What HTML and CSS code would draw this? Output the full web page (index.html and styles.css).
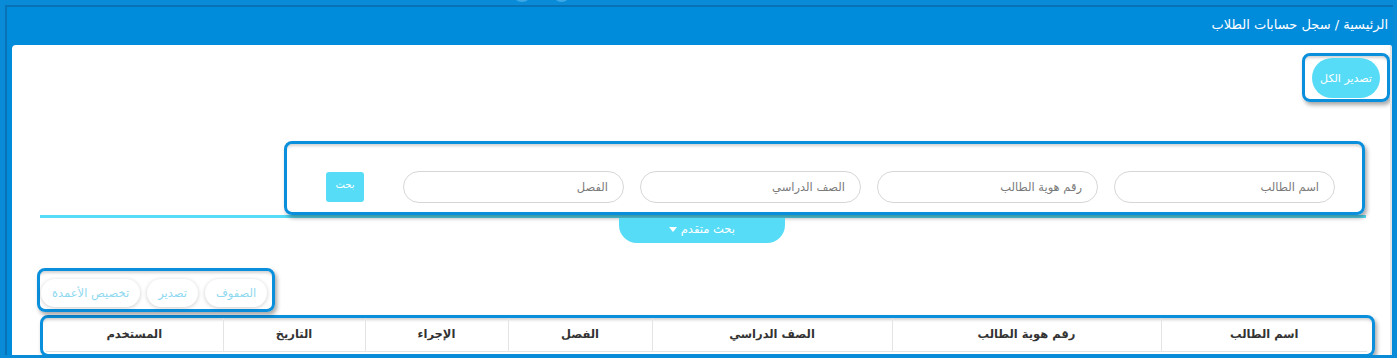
FILE: index.html
```html
<!DOCTYPE html>
<html lang="ar" dir="rtl">
<head>
<meta charset="utf-8">
<title>سجل حسابات الطلاب</title>
<link rel="stylesheet" href="styles.css">
</head>
<body>
<div class="topbar">
  <span class="dot dot-a"></span>
  <span class="dot dot-b"></span>
</div>
<div class="shell">
  <div class="crumb">الرئيسية / سجل حسابات الطلاب</div>
  <div class="panel">
    <div class="export-row">
      <div class="hl export-wrap">
        <button class="btn-export">تصدير الكل</button>
      </div>
    </div>

    <div class="search-area">
      <div class="hl search-box">
        <div class="field">اسم الطالب</div>
        <div class="field">رقم هوية الطالب</div>
        <div class="field">الصف الدراسي</div>
        <div class="field">الفصل</div>
        <button class="btn-search">بحث</button>
      </div>
    </div>
    <div class="adv-tab">بحث متقدم <span class="caret"></span></div>

    <div class="toolbar-row">
      <div class="hl toolbar">
        <button class="tool">الصفوف</button>
        <button class="tool">تصدير</button>
        <button class="tool">تخصيص الأعمدة</button>
      </div>
    </div>

    <div class="hl table-wrap">
      <table class="grid">
        <colgroup>
          <col class="c-name">
          <col class="c-id">
          <col class="c-grade">
          <col class="c-class">
          <col class="c-action">
          <col class="c-date">
          <col class="c-user">
        </colgroup>
        <thead>
          <tr>
            <th>اسم الطالب</th>
            <th>رقم هوية الطالب</th>
            <th>الصف الدراسي</th>
            <th>الفصل</th>
            <th>الإجراء</th>
            <th>التاريخ</th>
            <th>المستخدم</th>
          </tr>
        </thead>
      </table>
    </div>
  </div>
</div>
</body>
</html>
```

FILE: styles.css
```css
* { box-sizing: border-box; }

html, body {
  margin: 0;
  padding: 0;
  height: 100%;
  overflow: hidden;
}

body {
  background: #0a8bd8;
  font-family: "DejaVu Sans", "Noto Sans", sans-serif;
}

.topbar {
  height: 5px;
  display: flex;
  direction: ltr;
  padding-left: 512px;
  gap: 20px;
  overflow: hidden;
}

.dot {
  display: block;
  width: 20px;
  height: 20px;
  margin-top: -18px;
  border-radius: 50%;
  background: #3da8e6;
}

.dot-b { width: 19px; }

.shell {
  margin: 0 4px 0 5px;
  border-top: 2px solid #0772b5;
  border-left: 2px solid #0772b5;
  padding-left: 5px;
  background: #008bdb;
}

.crumb {
  height: 38px;
  color: #ffffff;
  font-size: 13px;
  line-height: 36px;
  padding-right: 5px;
}

.panel {
  background: #ffffff;
  height: 310px;
  margin-right: 1px;
  border-right: 2px solid #e6e6e6;
  border-radius: 4px 2px 0 0;
  overflow: hidden;
}

.hl {
  border: 3px solid #0a8fdc;
  border-radius: 8px;
  box-shadow: 2px 3px 4px rgba(0, 0, 0, 0.35), inset 0 4px 3px -2px rgba(0, 0, 0, 0.18);
}

.export-row {
  display: flex;
  padding-top: 8px;
}

.export-wrap {
  padding: 2px 7px 1px;
}

.btn-export {
  width: 68px;
  height: 40px;
  border: 0;
  border-radius: 20px;
  background: #56dcf6;
  color: #ffffff;
  font-family: inherit;
  font-size: 11px;
  padding: 0;
}

.search-area {
  margin: 39px 24px 0 28px;
  border-bottom: 3px solid #56dcf6;
}

.search-box {
  margin-left: 244px;
  margin-right: 1px;
  height: 74px;
  display: flex;
  align-items: flex-start;
  gap: 16px;
  padding: 27px 27px 0 0;
}

.field {
  width: 221px;
  height: 32px;
  border: 1px solid #d6d6d6;
  border-radius: 16px;
  color: #7a7a7a;
  font-size: 11.5px;
  line-height: 30px;
  padding-right: 15px;
}

.btn-search {
  width: 38px;
  height: 30px;
  margin-top: 1px;
  margin-right: 23px;
  border: 0;
  border-radius: 3px;
  background: #56dcf6;
  color: #ffffff;
  font-family: inherit;
  font-size: 10px;
  padding: 0 0 6px;
}

.adv-tab {
  width: 166px;
  height: 25px;
  margin: 0 auto;
  position: relative;
  left: 1px;
  background: #56dcf6;
  border-radius: 0 0 18px 18px;
  color: #ffffff;
  font-size: 11.5px;
  line-height: 23px;
  text-align: center;
}

.caret {
  display: inline-block;
  width: 0;
  height: 0;
  border-left: 4px solid transparent;
  border-right: 4px solid transparent;
  border-top: 5px solid #ffffff;
  vertical-align: middle;
}

.toolbar-row {
  display: flex;
  justify-content: flex-end;
  padding-left: 25px;
  margin-top: 25px;
}

.toolbar {
  display: flex;
  gap: 7px;
  padding: 8px 5px 2px 1px;
}

.tool {
  height: 28px;
  border: 0;
  border-radius: 14px;
  background: #ffffff;
  box-shadow: 0 1px 4px rgba(0, 0, 0, 0.2);
  color: #8fd9ef;
  font-family: inherit;
  font-size: 11.5px;
  padding: 0 11px;
}

.table-wrap {
  margin: 3px 15px 0 28px;
  padding: 0 5px 2px 3px;
}

.grid {
  width: 100%;
  border-collapse: collapse;
  table-layout: fixed;
}

.grid th {
  height: 33px;
  border-left: 1px solid #e4e4e4;
  border-bottom: 1px solid #e4e4e4;
  color: #333333;
  font-size: 11.5px;
  font-weight: bold;
  text-align: center;
  padding: 0;
}

.grid th:last-child { border-left: 0; }

.c-name { width: 206px; }
.c-id { width: 269px; }
.c-grade { width: 240px; }
.c-class { width: 144px; }
.c-action { width: 143px; }
.c-date { width: 142px; }
.c-user { width: 177px; }
```
